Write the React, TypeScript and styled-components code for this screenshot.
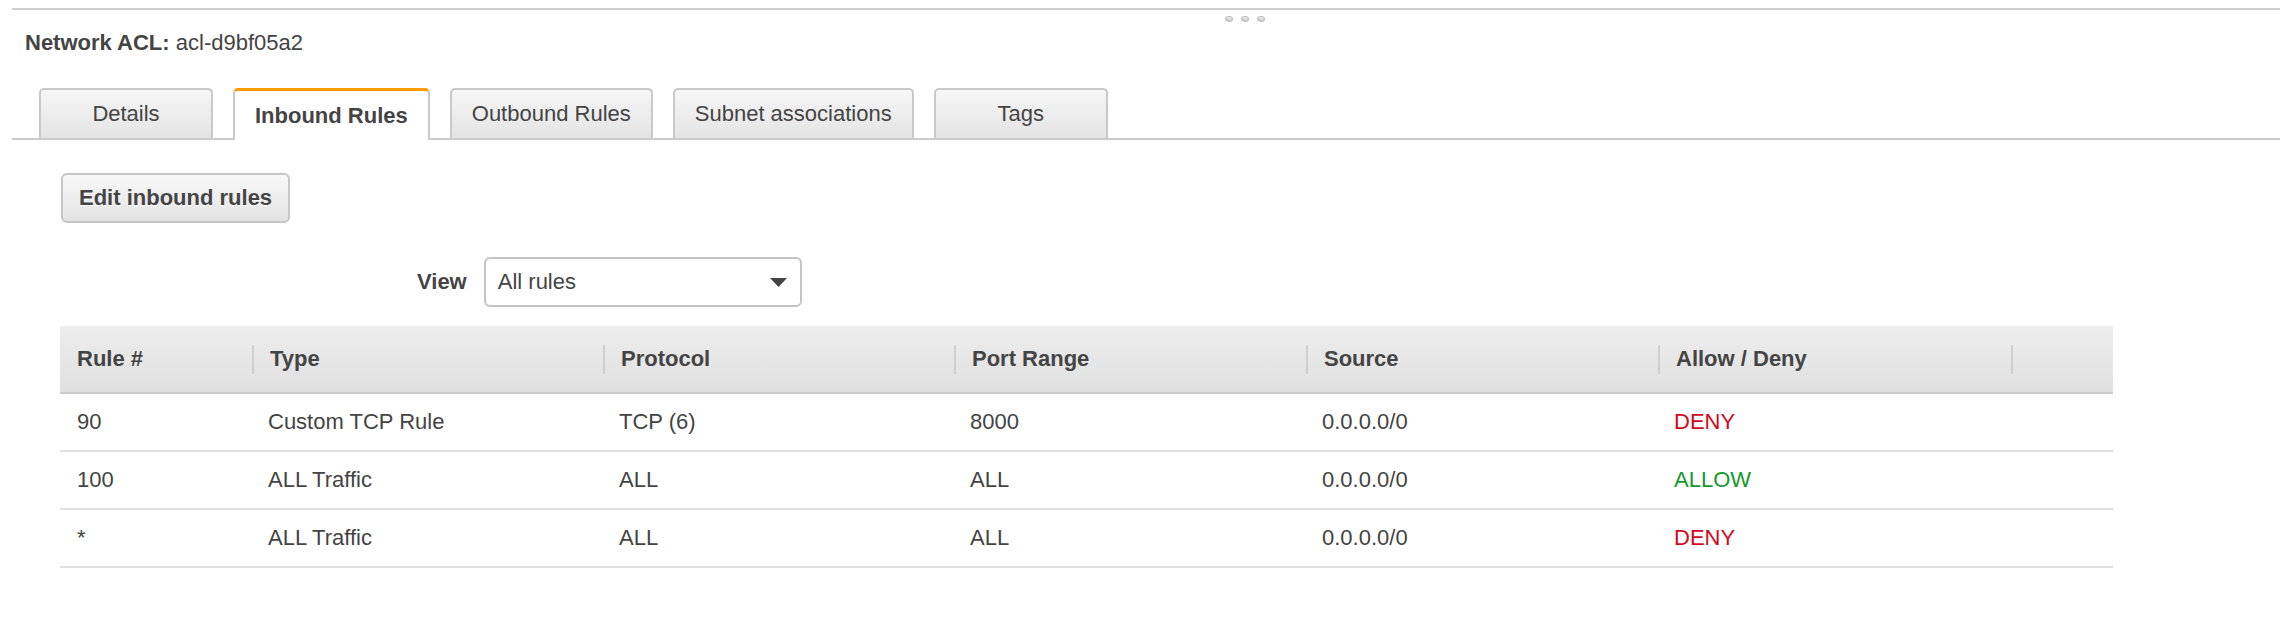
import React from "react";
import styled, { createGlobalStyle } from "styled-components";

const GlobalStyle = createGlobalStyle`
  html, body { margin: 0; padding: 0; background: #fff; }
  body {
    font-family: "Liberation Sans", Arial, Helvetica, sans-serif;
    color: #444;
    font-size: 22px;
  }
  * { box-sizing: border-box; }
`;

const COLS = "192px 351px 351px 352px 352px 353px 102px";

const Page = styled.div`
  width: 2280px;
  height: 630px;
  padding-left: 12px;
  overflow: hidden;
`;

const TopRule = styled.div`
  margin-top: 8px;
  border-top: 2px solid #cfcfcf;
`;

const HandleRow = styled.div`
  display: flex;
  gap: 8px;
  margin-top: 6px;
  padding-left: 1213px;
  height: 6px;
`;

const HandleDot = styled.span`
  width: 8px;
  height: 6px;
  border-radius: 50%;
  background: linear-gradient(#ececec, #c8c8c8);
  border: 1px solid #bdbdbd;
`;

const Heading = styled.h2`
  margin: 8px 0 0 13px;
  font-size: 22px;
  line-height: 26px;
  font-weight: normal;
  color: #444;
`;

const HeadingLabel = styled.span`
  font-weight: bold;
`;

const TabBar = styled.div`
  margin-top: 32px;
  height: 52px;
  display: flex;
  align-items: flex-end;
  gap: 20px;
  padding-left: 27px;
  border-bottom: 2px solid #cbcbcb;
`;

const Tab = styled.div<{ $active?: boolean }>`
  height: ${(p) => (p.$active ? 52 : 50)}px;
  margin-bottom: ${(p) => (p.$active ? -2 : 0)}px;
  min-width: 174px;
  padding: 0 20px;
  display: flex;
  align-items: center;
  justify-content: center;
  border: 2px solid #c9c9c9;
  border-bottom: none;
  border-top: ${(p) => (p.$active ? "3px solid #ff9900" : "2px solid #c9c9c9")};
  border-radius: 5px 5px 0 0;
  background: ${(p) => (p.$active ? "#fff" : "linear-gradient(#f6f6f6, #e4e4e4)")};
  font-weight: ${(p) => (p.$active ? "bold" : "normal")};
  font-size: 22px;
  line-height: 26px;
  color: #444;
  white-space: nowrap;
`;

const Content = styled.div`
  padding-left: 48px;
`;

const EditButton = styled.button`
  margin: 33px 0 0 1px;
  height: 50px;
  padding: 0 16px;
  border: 2px solid #c6c6c6;
  border-radius: 6px;
  background: linear-gradient(#f8f8f8, #e3e3e3);
  font-family: inherit;
  font-size: 22px;
  font-weight: bold;
  color: #444;
  text-shadow: 0 1px 0 #fff;
  display: block;
`;

const ViewRow = styled.div`
  margin-top: 34px;
  display: flex;
  align-items: center;
  gap: 17px;
  padding-left: 357px;
`;

const ViewLabel = styled.span`
  font-weight: bold;
  font-size: 22px;
  color: #444;
`;

const SelectBox = styled.div`
  width: 318px;
  height: 50px;
  border: 2px solid #c4c4c4;
  border-radius: 6px;
  background: #fff;
  display: flex;
  align-items: center;
  justify-content: space-between;
  padding: 0 13px 0 12px;
  font-size: 22px;
  color: #444;
`;

const Table = styled.div`
  margin-top: 19px;
  width: 2053px;
`;

const HeaderRow = styled.div`
  display: grid;
  grid-template-columns: ${COLS};
  height: 68px;
  background: linear-gradient(#ededed, #e0e0e0);
  border-bottom: 2px solid #cdcdcd;
`;

const HeaderCell = styled.div<{ $first?: boolean }>`
  display: flex;
  align-items: center;
  padding-left: ${(p) => (p.$first ? 17 : 0)}px;
  font-weight: bold;
  font-size: 22px;
  color: #444;
  white-space: nowrap;
`;

const Sep = styled.span`
  width: 2px;
  height: 29px;
  background: #cfcfcf;
  margin-right: 16px;
`;

const Row = styled.div`
  display: grid;
  grid-template-columns: ${COLS};
  height: 58px;
  border-bottom: 2px solid #e0e0e0;
`;

const Cell = styled.div<{ $tone?: "deny" | "allow" }>`
  display: flex;
  align-items: center;
  padding-left: 16px;
  font-size: 22px;
  white-space: nowrap;
  color: ${(p) => (p.$tone === "deny" ? "#cf0a1e" : p.$tone === "allow" ? "#16992c" : "#444")};
  &:first-child {
    padding-left: 17px;
  }
`;

const Caret = () => (
  <svg width="17" height="9" viewBox="0 0 17 9">
    <path d="M0 0 L17 0 L8.5 9 Z" fill="#444" />
  </svg>
);

const tabs = ["Details", "Inbound Rules", "Outbound Rules", "Subnet associations", "Tags"];
const headers = ["Rule #", "Type", "Protocol", "Port Range", "Source", "Allow / Deny", ""];
const rules: { num: string; type: string; proto: string; port: string; src: string; action: "DENY" | "ALLOW" }[] = [
  { num: "90", type: "Custom TCP Rule", proto: "TCP (6)", port: "8000", src: "0.0.0.0/0", action: "DENY" },
  { num: "100", type: "ALL Traffic", proto: "ALL", port: "ALL", src: "0.0.0.0/0", action: "ALLOW" },
  { num: "*", type: "ALL Traffic", proto: "ALL", port: "ALL", src: "0.0.0.0/0", action: "DENY" },
];

export default function App() {
  return (
    <>
      <GlobalStyle />
      <Page>
        <TopRule />
        <HandleRow>
          <HandleDot />
          <HandleDot />
          <HandleDot />
        </HandleRow>
        <Heading>
          <HeadingLabel>Network ACL:</HeadingLabel> acl-d9bf05a2
        </Heading>
        <TabBar>
          {tabs.map((t) => (
            <Tab key={t} $active={t === "Inbound Rules"}>
              {t}
            </Tab>
          ))}
        </TabBar>
        <Content>
          <EditButton>Edit inbound rules</EditButton>
          <ViewRow>
            <ViewLabel>View</ViewLabel>
            <SelectBox>
              <span>All rules</span>
              <Caret />
            </SelectBox>
          </ViewRow>
          <Table>
            <HeaderRow>
              {headers.map((h, i) => (
                <HeaderCell key={i} $first={i === 0}>
                  {i > 0 && <Sep />}
                  {h}
                </HeaderCell>
              ))}
            </HeaderRow>
            {rules.map((r, i) => (
              <Row key={i}>
                <Cell>{r.num}</Cell>
                <Cell>{r.type}</Cell>
                <Cell>{r.proto}</Cell>
                <Cell>{r.port}</Cell>
                <Cell>{r.src}</Cell>
                <Cell $tone={r.action === "DENY" ? "deny" : "allow"}>{r.action}</Cell>
                <Cell />
              </Row>
            ))}
          </Table>
        </Content>
      </Page>
    </>
  );
}
